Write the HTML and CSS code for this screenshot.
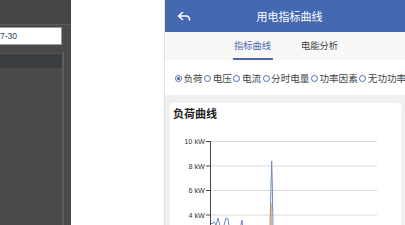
FILE: index.html
```html
<!DOCTYPE html>
<html lang="zh">
<head>
<meta charset="utf-8">
<link rel="stylesheet" href="styles.css">
</head>
<body>
<div class="side">
  <div class="side-top"></div>
  <div class="side-body">
    <div class="side-main">
      <div class="date-input">7-30</div>
      <div class="grid-head"></div>
    </div>
    <div class="side-scroll"></div>
  </div>
</div>
<div class="gap"></div>
<div class="phone">
  <div class="header">
    <svg class="back" width="14" height="11" viewBox="0 0 14 11">
      <path d="M5.5 1.5 L1.5 5 L5.5 8.5 M1.8 5 H9 Q12.5 5 12.5 9" fill="none" stroke="#fff" stroke-width="1.6" stroke-linejoin="round" stroke-linecap="round"/>
    </svg>
    <div class="title">用电指标曲线</div>
  </div>
  <div class="tabs">
    <div class="tab active">指标曲线</div>
    <div class="tab">电能分析</div>
  </div>
  <div class="radios">
    <span class="radio on"></span><span class="lbl">负荷</span>
    <span class="radio"></span><span class="lbl">电压</span>
    <span class="radio"></span><span class="lbl">电流</span>
    <span class="radio"></span><span class="lbl">分时电量</span>
    <span class="radio"></span><span class="lbl">功率因素</span>
    <span class="radio"></span><span class="lbl">无功功率</span>
  </div>
  <div class="content">
    <div class="card">
      <div class="card-title">负荷曲线</div>
      <svg class="chart" width="230" height="110" viewBox="0 0 230 110">
        <g stroke="#dcdcdc" stroke-width="1">
          <line x1="41" y1="16.5" x2="207" y2="16.5"/>
          <line x1="41" y1="41" x2="207" y2="41"/>
          <line x1="41" y1="65.5" x2="207" y2="65.5"/>
          <line x1="41" y1="90" x2="207" y2="90"/>
        </g>
        <g stroke="#444" stroke-width="1">
          <line x1="40.5" y1="16" x2="40.5" y2="110"/>
          <line x1="36" y1="16.5" x2="41" y2="16.5"/>
          <line x1="36" y1="41" x2="41" y2="41"/>
          <line x1="36" y1="65.5" x2="41" y2="65.5"/>
          <line x1="36" y1="90" x2="41" y2="90"/>
        </g>
        <g class="ylab" text-anchor="end">
          <text x="35" y="19">10 kW</text>
          <text x="35" y="43.5">8 kW</text>
          <text x="35" y="68">6 kW</text>
          <text x="35" y="92.5">4 kW</text>
        </g>
        <polyline fill="none" stroke="#6f88c8" stroke-width="1" points="41,98 42,99 44,97 46,100 48,93 49,97 50,101 53,104 56,93 58,94 59,100 61,104 64,103 70,104 72,95 73,103 76,104 85,104 95,105 100,104 101,60 101.7,36 102.3,60 103,104 110,105"/>
        <polyline fill="none" stroke="#e0a848" stroke-width="1" points="101.2,78 101.4,110"/>
      </svg>
    </div>
  </div>
</div>
</body>
</html>
```

FILE: styles.css
```css
html, body {
  margin: 0;
  padding: 0;
}
body {
  width: 405px;
  height: 225px;
  overflow: hidden;
  display: flex;
  background: #fff;
  font-family: "Noto Sans CJK SC", "Noto Sans", sans-serif;
}
.side {
  width: 71px;
  flex: none;
  display: flex;
  flex-direction: column;
  background: #4a4a4a;
}
.side-top {
  flex: none;
  height: 24px;
  background: #454545;
  border-bottom: 1px solid #5c5c5c;
}
.side-body {
  flex: 1;
  display: flex;
}
.side-main {
  width: 62px;
  display: flex;
  flex-direction: column;
}
.date-input {
  flex: none;
  margin-top: 2px;
  height: 16px;
  background: #fff;
  border: 1px solid #9a9a9a;
  border-left: none;
  font-family: "Liberation Sans", sans-serif;
  font-size: 8.5px;
  line-height: 16px;
  color: #2a3e66;
}
.grid-head {
  flex: none;
  margin-top: 8px;
  height: 14px;
  background: #3b3e41;
  border-top: 1px solid #555;
}
.side-scroll {
  margin-top: 27px;
  width: 2px;
  background: #5e5e5e;
}
.gap {
  width: 93px;
  flex: none;
}
.phone {
  width: 241px;
  flex: none;
  border-left: 1px solid #e2e2e2;
  display: flex;
  flex-direction: column;
  background: #f0f0f0;
}
.header {
  flex: none;
  height: 32px;
  background: #4569b0;
  display: flex;
  align-items: center;
}
.back {
  margin-left: 12px;
  flex: none;
}
.title {
  flex: 1;
  text-align: center;
  color: #fff;
  font-size: 11px;
  padding-right: 18px;
}
.tabs {
  flex: none;
  height: 28px;
  box-sizing: border-box;
  background: #f8f8f8;
  display: flex;
  justify-content: center;
  gap: 27px;
  padding-left: 1px;
}
.tab {
  width: 40px;
  box-sizing: border-box;
  text-align: center;
  font-size: 9.3px;
  line-height: 26px;
  color: #444;
  border-bottom: 2px solid transparent;
}
.tab.active {
  color: #4a69ab;
  border-bottom-color: #4a69ab;
}
.radios {
  flex: none;
  height: 35px;
  background: #fff;
  display: flex;
  align-items: center;
  white-space: nowrap;
  padding-left: 10px;
  padding-top: 1px;
  box-sizing: border-box;
  overflow: hidden;
}
.radio {
  flex: none;
  width: 7px;
  height: 7px;
  box-sizing: border-box;
  border: 1px solid #4a6ab8;
  border-radius: 50%;
  margin-right: 1.5px;
  margin-left: 1.5px;
  position: relative;
}
.radio:first-child {
  margin-left: 0;
}
.radio.on::after {
  content: "";
  position: absolute;
  left: 1px;
  top: 1px;
  width: 3px;
  height: 3px;
  border-radius: 50%;
  background: #3a5bb0;
}
.lbl {
  flex: none;
  font-size: 9.6px;
  color: #444;
}
.content {
  flex: 1;
  min-height: 0;
  padding: 8px 5px 0 5px;
}
.card {
  background: #fff;
  border-radius: 4px;
  height: 200px;
}
.card-title {
  height: 22px;
  line-height: 20px;
  padding-left: 3px;
  font-size: 11px;
  font-weight: bold;
  color: #222;
}
.chart {
  display: block;
}
.ylab text {
  font-family: "Liberation Sans", sans-serif;
  font-size: 7.3px;
  fill: #333;
}
```
